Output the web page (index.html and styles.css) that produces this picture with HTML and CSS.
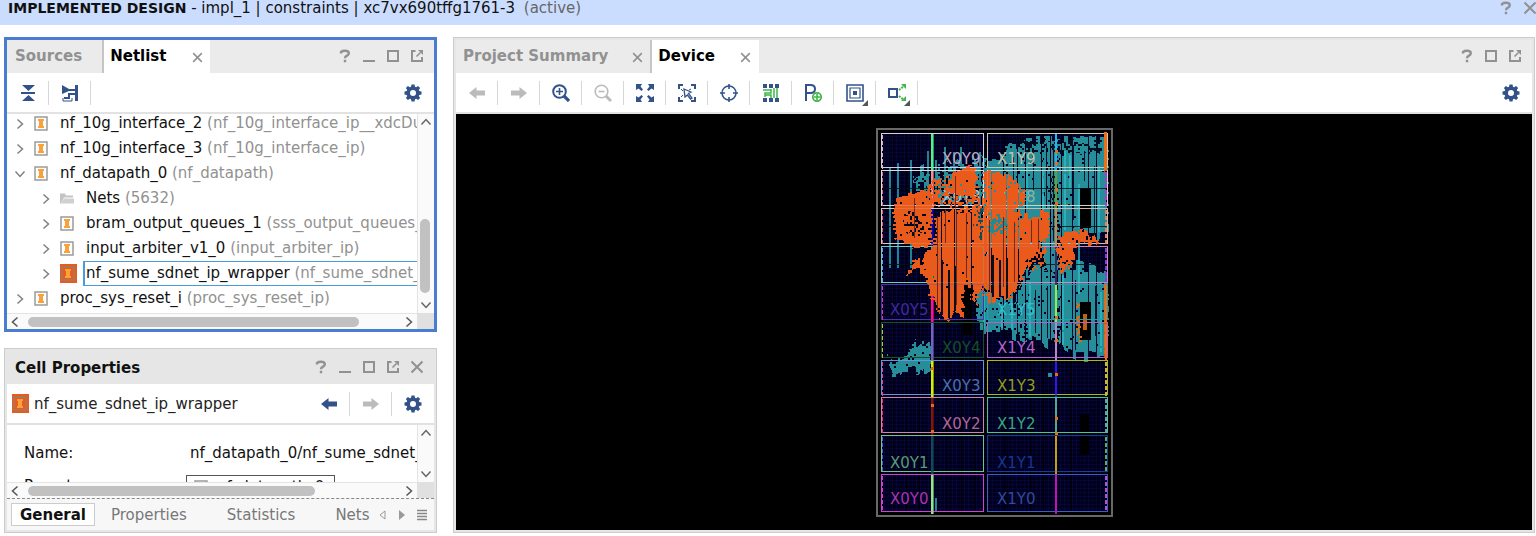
FILE: index.html
```html
<!DOCTYPE html>
<html lang="en">
<head>
<meta charset="utf-8">
<title>Implemented Design</title>
<link rel="stylesheet" href="styles.css">
</head>
<body>
<svg class="sprite" aria-hidden="true">
  <symbol id="help" viewBox="0 0 14 14"><path d="M3 4.500V3Q4.500 1.800 7 1.800Q10.800 1.800 10.800 4.300Q10.800 5.800 9 6.600Q7 7.500 7 9.300M7 10.800v2.400" fill="none" stroke="currentColor" stroke-width="2.400"/></symbol>
  <symbol id="min" viewBox="0 0 14 14"><path d="M1 12h12" stroke="currentColor" stroke-width="2"/></symbol>
  <symbol id="max" viewBox="0 0 14 14"><path d="M2 2h10v10H2z" fill="none" stroke="currentColor" stroke-width="2"/></symbol>
  <symbol id="float" viewBox="0 0 14 14"><path d="M5.500 2H2v10h10V8" fill="none" stroke="currentColor" stroke-width="2"/><path d="M6.500 7.500l4-4" stroke="currentColor" stroke-width="1.600"/><path d="M8 1h5v5z" fill="currentColor"/></symbol>
  <symbol id="close" viewBox="0 0 14 14"><path d="M1.500 1.500l11 11M12.500 1.500l-11 11" stroke="currentColor" stroke-width="2"/></symbol>
  <symbol id="gear" viewBox="0 0 18 18"><path fill="currentColor" fill-rule="evenodd" d="M7.500 0.500h3l.5 2.300 1.100.5 2-1.300 2 2-1.300 2 .5 1.100 2.200.4v3l-2.200.4-.5 1.100 1.300 2-2 2-2-1.300-1.100.5-.5 2.300h-3l-.5-2.300-1.100-.5-2 1.300-2-2 1.300-2-.5-1.100L.5 10.500v-3l2.200-.4.5-1.100-1.300-2 2-2 2 1.300 1.100-.5zM9 6a3 3 0 1 0 0 6a3 3 0 1 0 0-6z"/></symbol>
  <symbol id="left" viewBox="0 0 18 18"><path fill="currentColor" d="M1 9l7.500-6v3.500H17v5H8.500V15z"/></symbol>
  <symbol id="right" viewBox="0 0 18 18"><path fill="currentColor" d="M17 9L9.500 3v3.500H1v5h8.500V15z"/></symbol>
  <symbol id="collapse" viewBox="0 0 18 18"><path fill="currentColor" d="M3 1h13L9.500 7zM3 17h13L9.500 11zM2 8h14v2H2z"/></symbol>
  <symbol id="hier" viewBox="0 0 18 18"><path fill="currentColor" d="M1 1l7 4v2L1 10zM14 1h3v16h-3z"/><path fill="none" stroke="currentColor" stroke-width="2" d="M7 6h8M15 10H8v4H3"/><path fill="none" stroke="currentColor" stroke-width="1" d="M2 14v3h9v-3"/></symbol>
  <symbol id="zin" viewBox="0 0 18 18"><circle cx="7.500" cy="7.500" r="6.300" fill="none" stroke="currentColor" stroke-width="2"/><path d="M7.500 4v7M4 7.500h7" stroke="currentColor" stroke-width="1.600"/><path d="M12 12l5 5" stroke="currentColor" stroke-width="3.200"/></symbol>
  <symbol id="zout" viewBox="0 0 18 18"><circle cx="7.500" cy="7.500" r="6.300" fill="none" stroke="currentColor" stroke-width="1.600"/><path d="M4.500 7.500h6" stroke="currentColor" stroke-width="1.600"/><path d="M12 12l5 5" stroke="currentColor" stroke-width="3"/></symbol>
  <symbol id="fit" viewBox="0 0 18 18"><path fill="currentColor" d="M0 0h6L4.500 2.500 7 5.500 5.500 7 2.500 4.500 0 6zM18 0h-6l1.500 2.500L11 5.500 12.500 7l3-2.500L18 6zM0 18h6l-1.500-2.500L7 12.500 5.500 11l-3 2.500L0 12zM18 18h-6l1.500-2.500L11 12.500l1.500-1.500 3 2.500L18 12z"/></symbol>
  <symbol id="select" viewBox="0 0 18 18"><path fill="none" stroke="currentColor" stroke-width="2" d="M1 5V1h4M13 1h4v4M17 13v4h-4M5 17H1v-4"/><path fill="none" stroke="currentColor" stroke-width="1.300" d="M6 5l7 3-2.500 1.500L14 14l-1.500 1-3-4L7 13z"/><path fill="none" stroke="currentColor" stroke-width="1" d="M3 5l2 2M3 13l2-2M13 5l-2 1"/></symbol>
  <symbol id="target" viewBox="0 0 18 18"><circle cx="9" cy="9" r="7" fill="none" stroke="currentColor" stroke-width="1.500"/><path d="M9 0v5M9 13v5M0 9h5M13 9h5" stroke="currentColor" stroke-width="1.600"/></symbol>
  <symbol id="route" viewBox="0 0 18 18"><path fill="currentColor" d="M1 0h4v4H1zM7 0h4v4H7zM13 0h4v4h-4zM1 14h4v4H1zM7 14h4v4H7zM13 14h4v4h-4z"/><path fill="none" stroke="#41b649" stroke-width="1.500" d="M1 6h8v3H3v4M3 11h6v3M12 4v10M15 4v10M9 5v4"/></symbol>
  <symbol id="pblock" viewBox="0 0 18 18"><path fill="none" stroke="currentColor" stroke-width="2" d="M2 17V1h4.500q4.500 0 4.500 4t-4.500 4H2"/><circle cx="13" cy="13" r="4.200" fill="#fff" stroke="#41b649" stroke-width="1.800"/><path d="M13 10v6M10 13h6" stroke="#41b649" stroke-width="1.600"/></symbol>
  <symbol id="layers" viewBox="0 0 22 22"><path fill="none" stroke="currentColor" stroke-width="1.600" d="M1 1h16v16H1z"/><path fill="none" stroke="currentColor" stroke-width="1.200" d="M4 4h10v10H4z"/><path fill="currentColor" d="M7 7h4v4H7z"/><path fill="#555" d="M22 16v6h-6z"/></symbol>
  <symbol id="expand" viewBox="0 0 22 22"><path fill="none" stroke="currentColor" stroke-width="2" d="M1 5h8v8H1z"/><path fill="none" stroke="#41b649" stroke-width="2" stroke-dasharray="2 1" d="M11 6l5-4M11 12l5 4"/><path fill="#41b649" d="M13 0h5v5zM13 17h5v-5z"/><path fill="#555" d="M22 16v6h-6z"/></symbol>
  <symbol id="inst" viewBox="0 0 14 15"><path fill="#fff" stroke="#9b9b9b" stroke-width="1.500" d="M1 1h12v13H1z"/><path fill="#f9a13a" d="M4 3h6v2H9v5h1v2H4v-2h1V5H4z"/></symbol>
  <symbol id="instsel" viewBox="0 0 17 19"><path fill="#ea5a1a" d="M0 0h17v19H0z"/><path fill="none" stroke="#94806f" stroke-width="1.500" d="M2 3h12v13H2z"/><path fill="#f9a13a" d="M5 5h6v2h-1v5h1v2H5v-2h1V7H5z"/></symbol>
  <symbol id="folder" viewBox="0 0 14 12"><path fill="#c4c4c4" d="M0 1h5l1 2h7v2H4L1 11H0z"/><path fill="#d0d0d0" d="M4 6h10v5H1z"/></symbol>
  <symbol id="chr" viewBox="0 0 12 12"><path fill="none" stroke="currentColor" stroke-width="1.500" d="M3.500 1.500L8.500 6l-5 4.500"/></symbol>
  <symbol id="chl" viewBox="0 0 12 12"><path fill="none" stroke="currentColor" stroke-width="1.500" d="M8.500 1.500L3.500 6l5 4.500"/></symbol>
  <symbol id="chd" viewBox="0 0 12 12"><path fill="none" stroke="currentColor" stroke-width="1.500" d="M1.500 3.500L6 8.500l4.500-5"/></symbol>
  <symbol id="chu" viewBox="0 0 12 12"><path fill="none" stroke="currentColor" stroke-width="1.500" d="M1.500 8.500L6 3.500l4.500 5"/></symbol>
</svg>

<header class="titlebar">
  <h1 class="title"><b>IMPLEMENTED DESIGN</b> - impl_1 | constraints | xc7vx690tffg1761-3 <span class="state">(active)</span></h1>
  <div class="controls">
    <button class="ctl" aria-label="Help"><svg><use href="#help"/></svg></button>
    <button class="ctl" aria-label="Close"><svg><use href="#close"/></svg></button>
  </div>
</header>

<main class="workspace">
  <div class="side">
    <section class="panel active">
      <div class="tabbar">
        <button class="tab">Sources</button>
        <button class="tab current netlist">Netlist</button>
        <button class="tabclose current" aria-label="Close Netlist"><svg><use href="#close"/></svg></button>
        <div class="controls">
          <button class="ctl" aria-label="Help"><svg><use href="#help"/></svg></button>
          <button class="ctl" aria-label="Minimize"><svg><use href="#min"/></svg></button>
          <button class="ctl" aria-label="Maximize"><svg><use href="#max"/></svg></button>
          <button class="ctl" aria-label="Float"><svg><use href="#float"/></svg></button>
        </div>
      </div>
      <div class="toolbar">
        <button class="tool" aria-label="Collapse all"><svg><use href="#collapse"/></svg></button>
        <button class="tool" aria-label="Hierarchy"><svg><use href="#hier"/></svg></button>
        <button class="tool last" aria-label="Settings"><svg><use href="#gear"/></svg></button>
      </div>
      <div class="scroller grow">
        <ul class="tree view">
          <li class="row"><button class="twist" aria-label="Expand"><svg><use href="#chr"/></svg></button><svg class="icon"><use href="#inst"/></svg><span class="label">nf_10g_interface_2 <i>(nf_10g_interface_ip__xdcDup__1)</i></span></li>
          <li class="row"><button class="twist" aria-label="Expand"><svg><use href="#chr"/></svg></button><svg class="icon"><use href="#inst"/></svg><span class="label">nf_10g_interface_3 <i>(nf_10g_interface_ip)</i></span></li>
          <li class="row"><button class="twist" aria-label="Collapse"><svg><use href="#chd"/></svg></button><svg class="icon"><use href="#inst"/></svg><span class="label">nf_datapath_0 <i>(nf_datapath)</i></span></li>
          <li class="row child"><button class="twist" aria-label="Expand"><svg><use href="#chr"/></svg></button><svg class="icon"><use href="#folder"/></svg><span class="label">Nets <i>(5632)</i></span></li>
          <li class="row child"><button class="twist" aria-label="Expand"><svg><use href="#chr"/></svg></button><svg class="icon"><use href="#inst"/></svg><span class="label">bram_output_queues_1 <i>(sss_output_queues_ip)</i></span></li>
          <li class="row child"><button class="twist" aria-label="Expand"><svg><use href="#chr"/></svg></button><svg class="icon"><use href="#inst"/></svg><span class="label">input_arbiter_v1_0 <i>(input_arbiter_ip)</i></span></li>
          <li class="row child selected"><button class="twist" aria-label="Expand"><svg><use href="#chr"/></svg></button><svg class="icon big"><use href="#instsel"/></svg><span class="label">nf_sume_sdnet_ip_wrapper <i>(nf_sume_sdnet_ip_wrapper)</i></span></li>
          <li class="row"><button class="twist" aria-label="Expand"><svg><use href="#chr"/></svg></button><svg class="icon"><use href="#inst"/></svg><span class="label">proc_sys_reset_i <i>(proc_sys_reset_ip)</i></span></li>
        </ul>
        <div class="vbar"><button class="arrow" aria-label="Up"><svg><use href="#chu"/></svg></button><span class="vthumb"></span><button class="arrow" aria-label="Down"><svg><use href="#chd"/></svg></button></div>
        <div class="hbar"><button class="arrow" aria-label="Left"><svg><use href="#chl"/></svg></button><span class="track"><span class="hthumb"></span></span><button class="arrow" aria-label="Right"><svg><use href="#chr"/></svg></button></div>
        <div class="corner"></div>
      </div>
    </section>

    <section class="panel">
      <div class="tabbar heading">
        <h2 class="name">Cell Properties</h2>
        <div class="controls">
          <button class="ctl" aria-label="Help"><svg><use href="#help"/></svg></button>
          <button class="ctl" aria-label="Minimize"><svg><use href="#min"/></svg></button>
          <button class="ctl" aria-label="Maximize"><svg><use href="#max"/></svg></button>
          <button class="ctl" aria-label="Float"><svg><use href="#float"/></svg></button>
          <button class="ctl" aria-label="Close"><svg><use href="#close"/></svg></button>
        </div>
      </div>
      <div class="toolbar">
        <svg class="icon big object"><use href="#instsel"/></svg><span class="objname">nf_sume_sdnet_ip_wrapper</span>
        <button class="tool push" aria-label="Back"><svg><use href="#left"/></svg></button>
        <button class="tool off" aria-label="Forward"><svg><use href="#right"/></svg></button>
        <button class="tool end" aria-label="Settings"><svg><use href="#gear"/></svg></button>
      </div>
      <div class="scroller">
        <dl class="props view">
          <dt>Name:</dt><dd>nf_datapath_0/nf_sume_sdnet_ip_wrapper</dd>
          <dt>Parent:</dt><dd><a class="ref" href="#parent"><svg class="icon"><use href="#inst"/></svg>nf_datapath_0</a></dd>
        </dl>
        <div class="vbar"><button class="arrow" aria-label="Up"><svg><use href="#chu"/></svg></button><button class="arrow bottom" aria-label="Down"><svg><use href="#chd"/></svg></button></div>
        <div class="hbar"><button class="arrow" aria-label="Left"><svg><use href="#chl"/></svg></button><span class="track"><span class="hthumb short"></span></span><button class="arrow" aria-label="Right"><svg><use href="#chr"/></svg></button></div>
        <div class="corner"></div>
      </div>
      <nav class="pages">
        <button class="page here">General</button><button class="page">Properties</button><button class="page">Statistics</button><button class="page final">Nets</button>
        <button class="mini" aria-label="Previous tab"><svg viewBox="0 0 10 12"><path d="M8 2v8L3 6z" fill="none" stroke="#999"/></svg></button>
        <button class="mini" aria-label="Next tab"><svg viewBox="0 0 10 12"><path d="M2 1v10l6-5z" fill="#999"/></svg></button>
        <button class="mini" aria-label="Tab list"><svg viewBox="0 0 10 12"><path d="M0 1.500h10M0 4.500h10M0 7.500h10M0 10.500h10" stroke="#888" stroke-width="1.500"/></svg></button>
      </nav>
    </section>
  </div>

  <section class="panel">
    <div class="tabbar">
      <button class="tab summary">Project Summary</button>
      <button class="tabclose" aria-label="Close Project Summary"><svg><use href="#close"/></svg></button>
      <button class="tab current device-tab">Device</button>
      <button class="tabclose current" aria-label="Close Device"><svg><use href="#close"/></svg></button>
      <div class="controls">
        <button class="ctl" aria-label="Help"><svg><use href="#help"/></svg></button>
        <button class="ctl" aria-label="Maximize"><svg><use href="#max"/></svg></button>
        <button class="ctl" aria-label="Float"><svg><use href="#float"/></svg></button>
      </div>
    </div>
    <div class="toolbar">
      <button class="tool off" aria-label="Back"><svg><use href="#left"/></svg></button>
      <button class="tool off" aria-label="Forward"><svg><use href="#right"/></svg></button>
      <button class="tool" aria-label="Zoom in"><svg><use href="#zin"/></svg></button>
      <button class="tool off" aria-label="Zoom out"><svg><use href="#zout"/></svg></button>
      <button class="tool" aria-label="Zoom fit"><svg><use href="#fit"/></svg></button>
      <button class="tool" aria-label="Select area"><svg><use href="#select"/></svg></button>
      <button class="tool" aria-label="Autofit selection"><svg><use href="#target"/></svg></button>
      <button class="tool" aria-label="Routing resources"><svg><use href="#route"/></svg></button>
      <button class="tool" aria-label="Draw pblock"><svg><use href="#pblock"/></svg></button>
      <button class="tool menu" aria-label="Layers"><svg><use href="#layers"/></svg></button>
      <button class="tool menu" aria-label="Connections"><svg><use href="#expand"/></svg></button>
      <button class="tool last" aria-label="Settings"><svg><use href="#gear"/></svg></button>
    </div>
    <div class="canvas"><svg id="device" class="device" viewBox="876 128 237 389" role="img" aria-label="Device floorplan"></svg></div>
  </section>
</main>
<script src="script.js"></script>
</body>
</html>
```
FILE: styles.css
```css
* { box-sizing: border-box; }
body {
  margin: 0;
  height: 100vh;
  display: flex;
  flex-direction: column;
  overflow: hidden;
  background: #fff;
  color: #111;
  font: 15px/20px "DejaVu Sans", sans-serif;
}
button {
  margin: 0;
  padding: 0;
  border: 0;
  background: none;
  color: inherit;
  font: inherit;
  display: flex;
  align-items: center;
  justify-content: center;
}
svg { display: block; }
.sprite { position: absolute; width: 0; height: 0; }

.titlebar {
  flex: none;
  height: 25px;
  display: flex;
  justify-content: space-between;
  padding: 0 0 9px 8px;
  margin-right: -6px;
  background: #cbddfe;
}
.title { margin: 0; font-size: 15px; font-weight: 400; line-height: 17px; white-space: nowrap; }
.title b { font-size: 14px; }
.state { color: #666; margin-left: 4px; }
.titlebar .controls { padding: 0; }

.controls { display: flex; align-items: center; margin-left: auto; padding: 0 5px 2px 0; color: #919191; }
.ctl { width: 24px; height: 24px; }
.ctl svg { width: 14px; height: 14px; }
.titlebar .ctl { height: 16px; }

.workspace {
  flex: 1;
  min-height: 0;
  display: grid;
  grid-template-columns: 433px minmax(0, 1fr);
  gap: 16px;
  padding: 12px 1px 3px 4px;
}
.side { display: flex; flex-direction: column; gap: 16px; min-height: 0; }
.panel {
  display: flex;
  flex-direction: column;
  min-width: 0;
  min-height: 0;
  border: 1px solid #ccc;
  outline: 2px solid #e6e6e6;
  outline-offset: -3px;
  padding: 2px;
  background: #fff;
}
.panel.active { flex: 1; border: 3px solid #4a7dcf; padding: 0; outline: 0; }

.tabbar { flex: none; height: 33px; display: flex; background: #ebebeb; }
.tab { padding: 0 20px 0 8px; font-weight: 700; color: #919191; height: 32px; align-self: flex-start; }
.tab.summary { padding: 0 16px 0 7px; }
.tab.current { color: #000; background: #fff; height: 33px; padding: 0 18px 1px 6px; border-left: 2px solid #c6c6c6; }
.tabclose { width: 26px; color: #919191; padding-top: 2px; }
.tabclose svg { width: 11px; height: 11px; }
.tabclose.current { background: #fff; }
.heading { background: #e6e6e6; padding-left: 8px; }
.name { margin: 0; font-size: 15px; line-height: 34px; }

.toolbar { flex: none; height: 41px; display: flex; align-items: center; color: #33528a; border-bottom: 2px solid #e2e2e2; }
.tool { width: 42px; height: 24px; border-right: 1px solid #d6d6d6; }
.tool svg { width: 18px; height: 18px; }
.tool.off { color: #bbb; }
.tool.menu svg { width: 22px; height: 22px; margin: 4px 0 0 4px; }
.tool.last, .tool.end { border: 0; }
.tool.last, .push { margin-left: auto; }
.objname { color: #222; margin-left: 5px; }

.scroller { display: grid; grid-template: minmax(0, 1fr) 16px / minmax(0, 1fr) 17px; height: 73px; }
.scroller.grow { flex: 1; height: auto; min-height: 0; }
.view { overflow: hidden; margin: 0; padding: 0; min-height: 0; }
.row { display: flex; align-items: center; height: 25px; padding-left: 7px; white-space: nowrap; }
.tree { list-style: none; }
.tree .row:first-child { margin-top: -3px; }
.row.child { padding-left: 33px; }
.twist { width: 12px; height: 20px; margin-right: 8px; color: #808080; flex: none; }
.twist svg { width: 12px; height: 12px; }
.icon { width: 14px; height: 15px; flex: none; margin-right: 3px; }
.icon.big { width: 17px; height: 19px; margin-right: 0; }
.icon.big.object { margin-left: 5px; }
.label { flex: 1; min-width: 0; margin-left: 6px; border: 1px solid transparent; border-left-width: 2px; border-right: 0; padding-left: 1px; height: 25px; line-height: 23px; overflow: hidden; }
.label i { font-style: normal; color: #919191; }
.selected .label { border-color: #4a9cd8; }

.vbar { display: flex; flex-direction: column; background: #fafafa; border-left: 1px solid #e4e4e4; color: #666; }
.hbar { display: flex; background: #fafafa; border-top: 1px solid #e4e4e4; color: #555; }
.arrow { width: 16px; height: 16px; flex: none; }
.arrow svg { width: 12px; height: 12px; }
.vthumb { width: 10px; flex: 0 0 74px; margin: auto 0 4px 2px; border-radius: 5px; background: #c1c1c1; }
.bottom { margin-top: auto; }
.track { flex: 1; padding: 3px 5px; }
.hthumb { display: block; width: 90%; height: 10px; border-radius: 5px; background: #c1c1c1; }
.hthumb.short { width: 78%; }
.corner { background: #e0e0e0; }

.props { display: grid; grid-template-columns: 166px auto; grid-template-rows: 20px 24px; row-gap: 12px; padding: 18px 0 0 17px; white-space: nowrap; }
.props dt, .props dd { margin: 0; }
.props dt:last-of-type { line-height: 22px; }
.ref { display: flex; align-items: center; width: 149px; height: 24px; margin-left: -4px; padding-left: 7px; border: 1px solid #555; color: #111; text-decoration: none; line-height: 20px; }
.ref .icon { margin-right: 9px; }

.pages { display: flex; align-items: center; height: 32px; border-top: 1px dashed #888; background: #f7f7f7; padding: 0 4px; color: #777; }
.page { height: 23px; padding: 0 8px; margin-right: 24px; }
.page.here { border: 1px solid #ccc; background: #fff; color: #111; font-weight: 700; margin-right: 8px; }
.page.final { margin-right: 0; padding-right: 2px; }
.mini { width: 20px; height: 20px; flex: none; }
.mini svg { width: 10px; height: 12px; }

.canvas { flex: 1; min-height: 0; background: #000; display: flex; align-items: center; justify-content: center; }
.device { width: 237px; height: 389px; }
.device text { font: 15px "DejaVu Sans", sans-serif; }
```
FILE: script.js
```javascript
const NS = 'http://www.w3.org/2000/svg';
const device = document.getElementById('device');

function add(name, attrs, text) {
  const el = document.createElementNS(NS, name);
  for (const key in attrs) el.setAttribute(key, attrs[key]);
  if (text) el.textContent = text;
  device.appendChild(el);
}
function box(x, y, w, h, fill, opacity = 1) {
  add('rect', { x, y, width: w, height: h, fill, opacity });
}

// Repeatable noise in 0..1 for a lattice position.
function noise(a, b, c) {
  let n = Math.imul(a | 0, 374761393) ^ Math.imul(b | 0, 668265263) ^ Math.imul(c | 0, 2246822519);
  n = Math.imul(n ^ (n >>> 13), 1274126177);
  n = Math.imul(n ^ (n >>> 15), 2246822507);
  return ((n ^ (n >>> 16)) >>> 0) / 4294967296;
}
function inside(p, x, y) {
  let hit = false;
  for (let i = 0, j = p.length - 2; i < p.length; j = i, i += 2) {
    if ((p[i + 1] > y) !== (p[j + 1] > y) &&
        x < (p[j] - p[i]) * (y - p[i + 1]) / (p[j + 1] - p[i + 1]) + p[i]) hit = !hit;
  }
  return hit;
}

// Fills an outline with placed cells: ragged edges, sparse holes.
let layer = 0;
function fillCells(shape, color, density, skip, jitter) {
  let d = '';
  layer++;
  const xs = shape.filter((v, i) => i % 2 === 0);
  const ys = shape.filter((v, i) => i % 2 === 1);
  for (let x = Math.min(...xs) - 2; x < Math.max(...xs) + 2; x++) {
    if (skip && skip(x)) continue;
    const col = x >> 1;
    const shift = (noise(col >> 1, 5, layer) - 0.5) * jitter;
    for (let y = Math.min(...ys) - 4; y < Math.max(...ys) + 4; y++) {
      const px = x + (noise(y >> 1, 11, layer) - 0.5) * 5;
      if (inside(shape, px, y + shift) && noise(col, y >> 1, layer) < density) d += 'M' + x + ' ' + y + 'h1v1h-1z';
    }
  }
  add('path', { d, fill: color, 'shape-rendering': 'crispEdges' });
}

// Clock regions, top to bottom: y, height, left, right, spine colours, edges.
const regions = [
  [133, 34, '#dccbe8', '#c9c9b4', '#50f28e', '#20b4f4', '#d5b5a5', '#f07010'],
  [170, 35, '#e0dcdc', '#d2d2c4', '#f29090', '#65a324', '#d07090', '#b832dc'],
  [208, 35, '#d8c8c0', '#d0bcb0', '#0808bc', '#dd8040', '#e06080', '#e08068'],
  [246, 36, '#70cfc7', '#d586c2', '#659c38', '#392868', '#7898f0', '#8040e0'],
  [284, 35, '#4c30b4', '#22a0ae', '#ff1090', '#92ef42', '#d040a0', '#f07010'],
  [322, 35, '#175229', '#b460cb', '#7562c2', '#c083ce', '#c0c030', '#f07010'],
  [360, 34, '#6594dc', '#aaba18', '#d4f000', '#3511f6', '#e0409a', '#d2b050'],
  [397, 35, '#d480b0', '#43c893', '#841212', '#50aa90', '#ff2070', '#70a0a0'],
  [435, 36, '#70c490', '#173d9e', '#104a58', '#c2a010', '#5656e6', '#63b040'],
  [474, 37, '#d241d5', '#3c5dc5', '#93e686', '#c410b6', '#d040d0', '#c050c0']
];
box(876, 128, 237, 389, '#686868');
box(878, 130, 233, 385, '#000');
for (const [y, h] of regions) {
  box(881, y, 103, h, '#00001c');
  box(987, y, 121, h, '#00001c');
}
for (let x = 884; x < 1106; x += 4) box(x, 134, 1, 377, '#0c0c58', x % 3 ? 0.4 : 0.15);
for (let y = 136; y < 510; y += 4) box(882, y, 225, 1, '#10106a', 0.3);
for (const x of [893, 906, 919, 946, 961, 975, 1004, 1030, 1043, 1071, 1097]) box(x, 134, 1, 377, '#000');
for (const [x, y, h] of [[889,168,100],[897,163,105],[910,160,108],[927,151,50],[944,147,40],[953,152,20],[960,147,22],[979,152,120],[983,158,110],[935,160,36],[974,160,30],[935,498,13]]) box(x, y, 2, h, '#279aa3', 0.85);
box(1080, 414, 9, 41, '#000');

const teal = '#268e98';
const gapT = x => [1003, 1017, 1025, 1041, 1050, 1061, 1072, 1088, 1096].includes(x);
const tealShapes = [
  [986,155, 1003,154, 1006,146, 1021,143, 1030,139, 1044,140, 1046,210, 1040,245, 1005,245, 986,240],
  [1044,139, 1058,139, 1056,270, 1046,275, 1040,255],
  [1058,140, 1107,139, 1107,234, 1088,237, 1079,231, 1058,245],
  [1023,276, 1035,264, 1048,268, 1058,290, 1054,345, 1043,343, 1025,335, 1021,300],
  [977,290, 986,285, 998,296, 1012,304, 1024,280, 1026,340, 1012,334, 1000,329, 985,329, 977,325],
  [1057,268, 1078,264, 1090,268, 1107,276, 1107,358, 1092,356, 1078,356, 1067,352, 1058,346],
  [918,172, 929,168, 928,187, 912,187],
  [935,167, 985,158, 985,200, 935,205],
  [889,359, 903,354, 912,352, 914,345, 931,338, 930,366, 919,372, 904,369, 890,373]
];
tealShapes.forEach((s, i) => fillCells(s, teal, [.96,.93,.985,.96,.92,.97,.8,.48,.9][i], gapT, 12));
fillCells([1020,140, 1107,141, 1107,154, 1015,151], '#010c20', .36, null, 8);
fillCells([1047,174, 1054,174, 1054,205, 1047,205], '#010c20', .45, null, 4);
for (const [x, y, h] of [[1026,164,45],[1042,170,42],[1064,150,80],[1078,184,110],[1098,166,66],[983,294,35],[1011,280,50],[1029,282,55],[1062,275,70],[1100,292,60],[1001,306,24],[1069,155,35]]) box(x, y, 2, h, '#2dbbc3', .75);
for (const [x, y, h] of [[1046,143,65],[1053,146,95],[1073,145,75],[1084,151,30],[1094,166,70],[1033,150,40],[1013,157,30],[1047,286,52],[1035,290,43],[1075,280,70],[1095,286,50]]) box(x, y, 1, h, '#05142c');
box(1080, 188, 11, 40, '#000');
box(1080, 302, 11, 38, '#000');
box(963, 284, 9, 51, '#000');
box(1083, 314, 4, 16, '#c26012');
box(1048, 373, 4, 4, '#289099');

function frames(opacity) {
  for (const [y, h, left, right] of regions) {
    add('rect', { x: 881.5, y: y + 0.5, width: 102, height: h, fill: 'none', stroke: left, opacity });
    add('rect', { x: 987.5, y: y + 0.5, width: 120, height: h, fill: 'none', stroke: right, opacity });
  }
}
frames(1);
for (const y of [188, 226, 264]) box(882, y, 225, 1, '#001010', 0.8);

for (const [y, h, , , s1, s2, e1, e2] of regions) {
  box(931, y + 1, 2, h + 2, s1);
  box(933, y + 1, 1, h + 2, s1, 0.6);
  box(1055, y + 1, 2, h + 2, s2);
  for (let k = y + 2; k < y + h; k += 6) {
    box(882, k, 1, 4, e1);
    box(1105, k, 2, e2 === '#f07010' ? 6 : 4, e2);
  }
}

const labels = [
  ['X0Y9', 942, 164, '#bca9c8'], ['X1Y9', 997, 164, '#c3c3a8'],
  ['X0Y8', 942, 202, '#c0c0c0'], ['X1Y8', 997, 202, '#8cb5a8'],
  ['X0Y5', 890, 315, '#4028a0'], ['X1Y5', 997, 315, '#2fc0d2'],
  ['X0Y4', 942, 353, '#144f27'], ['X1Y4', 997, 353, '#b763cc'],
  ['X0Y3', 942, 391, '#4a70b0'], ['X1Y3', 997, 391, '#8f9e1c'],
  ['X0Y2', 942, 429, '#b36893'], ['X1Y2', 997, 429, '#35a87c'],
  ['X0Y1', 890, 468, '#589c74'], ['X1Y1', 997, 468, '#163590'],
  ['X0Y0', 890, 504, '#ab33af'], ['X1Y0', 997, 504, '#304a9e']
];
for (const [name, x, y, fill] of labels) add('text', { x, y, fill }, name);

const orange = '#ea5b1b';
const gapO = x => [941, 954, 971, 991, 1006, 1018].includes(x);
fillCells([948,178, 956,170, 968,167, 976,170, 977,196, 972,200, 962,196, 951,190], orange, .97, null, 6);
fillCells([984,171, 1000,171, 1012,178, 1020,187, 1026,193, 1022,206, 1009,215, 986,214, 984,195], orange, .97, gapO, 5);
fillCells([894,200, 905,194, 929,188, 932,207, 930,245, 914,247, 896,238, 893,216], orange, .97, null, 5);
fillCells([905,212, 918,213, 924,230, 913,238, 904,228], '#030a20', .35, null, 4);
fillCells([928,180, 949,174, 951,203, 932,206], orange, .6, gapO, 5);
fillCells([935,214, 952,208, 975,209, 980,220, 983,211, 1010,212, 1015,214, 1046,214, 1049,221, 1047,241, 1034,250, 1022,272, 1016,287, 1010,302, 998,297, 988,300, 979,286, 975,306, 971,301, 971,284, 962,284, 962,313, 953,311, 947,320, 940,316, 935,303, 928,291, 923,270, 906,273, 914,263, 923,260, 925,248, 934,247], orange, .985, gapO, 9);
fillCells([1059,236, 1073,229, 1084,231, 1097,238, 1096,243, 1075,244, 1071,264, 1060,272, 1056,252], orange, .92, null, 5);
fillCells([1010,211, 1025,211, 1030,218, 1010,217], orange, .6, null, 5);
fillCells([971,197, 985,193, 985,213, 950,208, 952,198], orange, .55, null, 5);
fillCells([1025,243, 1046,245, 1046,266, 1030,270], orange, .36, null, 5);
fillCells([974,207, 982,205, 982,244, 974,230], '#134a58', .35, null, 5);
fillCells([988,220, 998,214, 1007,222, 1005,230, 990,234], '#268890', .7, null, 5);
for (const [x, y, h] of [[914,198,40],[937,216,95],[945,209,34],[955,176,32],[956,210,95],[966,213,65],[989,220,70],[1003,217,70],[1014,222,60],[1031,220,22],[1038,219,30]]) box(x, y, 1, h, '#602520', 0.9);
for (const [x, y, h] of [[941,260,55],[948,270,48],[954,266,45],[1006,258,40],[992,255,42],[999,260,37]]) box(x, y, 2, h, '#080f22');
for (const [x, y] of [[1055,150],[1055,162],[1055,188],[1055,202],[931,404],[931,430],[931,367],[1055,417],[1055,432],[1055,339],[1055,316],[1055,373]]) box(x, y, 3, 3, '#ee6911');
fillCells([1077,302, 1080,302, 1080,342, 1077,342], '#d86b16', .6, null, 2);
frames(0.22);
box(1104, 132, 3, 39, '#ef6d13');
box(1104, 284, 3, 74, '#ef6d13', 0.8);
```
